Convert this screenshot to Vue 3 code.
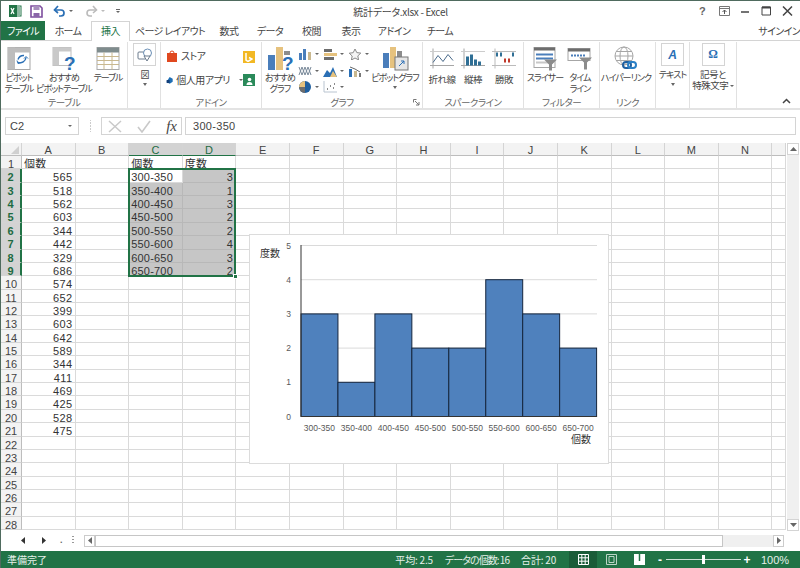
<template>
  <div class="window">
    <!-- タイトルバー -->
    <div class="titlebar">
      <div class="qat">
        <svg width="14" height="14" viewBox="0 0 14 14"><rect x="6" y="2" width="7" height="10" fill="#fff" stroke="#217346"/><path d="M8 4h4M8 6h4M8 8h4M8 10h4" stroke="#217346"/><rect x="1" y="1" width="8" height="12" fill="#217346"/><path d="M3 4l3 6M6 4l-3 6" stroke="#fff" stroke-width="1.3"/></svg>
        <svg width="13" height="13" viewBox="0 0 13 13"><path d="M1 1h9l2 2v9H1z" fill="none" stroke="#7d4e9e" stroke-width="1.6"/><rect x="3.5" y="1" width="6" height="4" fill="#a88fbd"/><rect x="3.5" y="8" width="6" height="4" fill="#8a66a8"/></svg>
        <svg class="undo" width="13" height="12" viewBox="0 0 13 12"><path d="M2 5h6a3 3 0 0 1 0 6H6" fill="none" stroke="#2a6fb5" stroke-width="1.7"/><path d="M5 1L1.5 5 5 8" fill="none" stroke="#2a6fb5" stroke-width="1.7"/></svg>
        <i class="caret small"></i>
        <svg class="redo" width="13" height="12" viewBox="0 0 13 12"><path d="M11 5H5a3 3 0 0 0 0 6h2" fill="none" stroke="#bbb" stroke-width="1.6"/><path d="M8 1l3.5 4L8 8" fill="none" stroke="#bbb" stroke-width="1.6"/></svg>
        <i class="caret small light"></i>
        <span class="customize"><b></b><i class="caret small"></i></span>
      </div>
      <div class="doc-title">統計データ.xlsx - Excel</div>
      <div class="winbtns">
        <span class="help">?</span>
        <svg width="11" height="10" viewBox="0 0 11 10"><path d="M.5 .5h10v9H.5zM.5 2.5h10" fill="none" stroke="#777"/><path d="M5.5 8V4M3.5 6l2-2 2 2" fill="none" stroke="#555"/></svg>
        <svg width="11" height="10" viewBox="0 0 11 10"><path d="M1 6h8" stroke="#444" stroke-width="1.5"/></svg>
        <svg width="11" height="10" viewBox="0 0 11 10"><path d="M1 1h8.5v8H1z" fill="none" stroke="#444"/><path d="M1 1.5h8.5" stroke="#444" stroke-width="2"/></svg>
        <svg width="11" height="10" viewBox="0 0 11 10"><path d="M1 .5l9 9M10 .5l-9 9" stroke="#444" stroke-width="1.5"/></svg>
      </div>
    </div>

    <!-- タブ -->
    <div class="tabs">
      <div v-for="tab in tabs" :key="tab.name" class="tab" :class="{ file: tab.name === 'ファイル', active: tab.name === '挿入' }" :style="{ width: tab.w + 'px' }">{{ tab.name }}</div>
      <div class="signin">サインイン</div>
    </div>

    <!-- リボン -->
    <div class="ribbon">
      <div class="group g-table">
        <div class="group-body">
          <div class="big w36">
            <svg width="24" height="24" viewBox="0 0 24 24"><rect x="1" y="1" width="22" height="22" fill="#fff" stroke="#a6a6a6"/><rect x="1" y="1" width="22" height="5" fill="#bdbdbd"/><rect x="1" y="1" width="7" height="22" fill="#bdbdbd"/><path d="M11 16a6 6 0 0 0 8-5M17 9a6 6 0 0 0-6 4" fill="none" stroke="#2a6fb5" stroke-width="1.4"/><path d="M10 14l1 3 3-1M17 12l2-2 2 2" fill="none" stroke="#2a6fb5"/></svg>
            <span class="lbl">ピボット<br>テーブル</span>
          </div>
          <div class="big w54">
            <svg width="24" height="24" viewBox="0 0 24 24"><rect x="1" y="1" width="18" height="18" fill="#fff" stroke="#bdbdbd"/><rect x="1" y="1" width="18" height="4" fill="#c9c9c9"/><rect x="1" y="1" width="6" height="18" fill="#c9c9c9"/><text x="12" y="23" class="qmark">?</text></svg>
            <span class="lbl">おすすめ<br>ピボットテーブル</span>
          </div>
          <div class="big w34">
            <svg width="24" height="24" viewBox="0 0 24 24"><rect x="1" y="1" width="22" height="22" fill="#fff" stroke="#a9a9a9"/><rect x="1" y="1" width="22" height="5" fill="#7f8c8d"/><path d="M1 10h22M1 14h22M1 18h22M8 6v17M16 6v17" stroke="#c9b88f"/></svg>
            <span class="lbl">テーブル</span>
          </div>
        </div>
        <div class="group-label">テーブル</div>
      </div>

      <div class="group g-illust">
        <div class="group-body">
          <div class="big w33">
            <span class="boxed">
              <svg width="16" height="16" viewBox="0 0 16 16"><rect x="1" y="5" width="8" height="7" rx="1" fill="#fff" stroke="#6b7a8c"/><circle cx="10.5" cy="6" r="4" fill="#fff" stroke="#6b8fb5"/><path d="M7 9l3 5 3-5z" fill="#fff" stroke="#6b7a8c"/></svg>
            </span>
            <span class="lbl">図</span>
            <i class="caret"></i>
          </div>
        </div>
      </div>

      <div class="group g-addin">
        <div class="group-body addin">
          <div class="addin-col">
            <div class="addin-row">
              <svg width="12" height="12" viewBox="0 0 12 12"><rect x="1" y="3" width="10" height="9" fill="#e0481f"/><path d="M4 3a2 2 0 0 1 4 0" fill="none" stroke="#e0481f"/></svg>
              <span>ストア</span>
            </div>
            <div class="addin-row">
              <svg width="12" height="12" viewBox="0 0 12 12"><path d="M6 1l5 3v5l-5 3-5-3z" fill="#1f6fb5"/><rect x="1" y="6" width="5" height="5" fill="#123f7a"/></svg>
              <span>個人用アプリ</span>
              <i class="caret small"></i>
            </div>
          </div>
          <div class="addin-icons">
            <span class="tile bing"><svg width="8" height="9" viewBox="0 0 8 9"><path d="M1 0v7l2 1.5L7 6 4 4.5" fill="none" stroke="#fff" stroke-width="1.5"/></svg></span>
            <span class="tile people"><svg width="9" height="9" viewBox="0 0 9 9"><circle cx="4.5" cy="3.5" r="1.8" fill="#fff"/><path d="M1.5 9a3 3 0 0 1 6 0z" fill="#fff"/></svg></span>
          </div>
        </div>
        <div class="group-label">アドイン</div>
      </div>

      <div class="group g-chart">
        <div class="group-body">
          <div class="big w36">
            <svg width="27" height="25" viewBox="0 0 27 25"><rect x="1" y="9" width="7" height="15" fill="#4a7ebb"/><rect x="9" y="1" width="7" height="23" fill="#e6c27e"/><rect x="17" y="5" width="6" height="4" fill="#8c8c8c"/><text x="15" y="24" class="qmark">?</text></svg>
            <span class="lbl">おすすめ<br>グラフ</span>
          </div>
          <div class="mini-grid">
            <span class="mini"><svg width="14" height="12" viewBox="0 0 14 12"><path d="M1 5h3v7H1z" fill="#4a7ebb"/><path d="M5 1h3v11H5z" fill="#4a7ebb"/><path d="M10 4h3v8h-3z" fill="#c9b88f"/></svg><i class="caret small"></i></span>
            <span class="mini"><svg width="14" height="12" viewBox="0 0 14 12"><path d="M1 1h8v3H1z" fill="#6d6d6d"/><path d="M1 5h13v3H1z" fill="#e6c27e"/><path d="M1 9h10v3H1z" fill="#6d6d6d"/></svg><i class="caret small"></i></span>
            <span class="mini"><svg width="14" height="12" viewBox="0 0 14 12"><path d="M7 1l1.8 3.6 4 .5-3 2.8.8 4L7 10 3.400 12l.8-4-3-2.800 4-.5z" fill="#f4f4f4" stroke="#8a8a8a"/></svg><i class="caret small"></i></span>
            <span class="mini"><svg width="14" height="12" viewBox="0 0 14 12"><path d="M1 2l3 8 3-8 3 8 3-8M1 10l3-8 3 8 3-8 3 8" fill="none" stroke="#7a8a9a"/></svg><i class="caret small"></i></span>
            <span class="mini"><svg width="14" height="12" viewBox="0 0 14 12"><path d="M0 12l4-7 3 3 3-6 4 10z" fill="#2a6fb5"/><path d="M7 12l3-6 4 6z" fill="#e6c27e"/></svg><i class="caret small"></i></span>
            <span class="mini"><svg width="14" height="12" viewBox="0 0 14 12"><path d="M1 4h3v8H1z" fill="#2a6fb5"/><path d="M6 6h3v6H6z" fill="#c9b88f"/><path d="M11 8h2v4h-2z" fill="#777"/><path d="M2 2l5 2 5 3" fill="none" stroke="#666"/></svg><i class="caret small"></i></span>
            <span class="mini"><svg width="14" height="12" viewBox="0 0 14 12"><circle cx="7" cy="6" r="6" fill="#1f5f9f"/><path d="M7 6V0A6 6 0 0 0 1 6z" fill="#e6c27e"/><path d="M7 6H1a6 6 0 0 0 6 6z" fill="#6d6d6d"/></svg><i class="caret small"></i></span>
            <span class="mini"><svg width="14" height="12" viewBox="0 0 14 12"><path d="M1 0v11h13" fill="none" stroke="#b9c4d0"/><path d="M4 8h1M7 5h1M10 7h1M11 3h1" stroke="#666" stroke-width="1.4"/></svg><i class="caret small"></i></span>
          </div>
          <div class="big w44">
            <svg width="27" height="25" viewBox="0 0 27 25"><rect x="1" y="7" width="6" height="15" fill="#4a7ebb"/><rect x="8" y="1" width="6" height="21" fill="#e6c27e"/><rect x="15" y="5" width="5" height="6" fill="#8c8c8c"/><rect x="13" y="11" width="13" height="13" fill="#e6e6e6" stroke="#777"/><path d="M17 20l5-5M19 15h3v3" fill="none" stroke="#2a6fb5"/></svg>
            <span class="lbl">ピボットグラフ</span>
            <i class="caret"></i>
          </div>
        </div>
        <div class="group-label">グラフ<svg class="launcher" width="7" height="7" viewBox="0 0 7 7"><path d="M.5 .5h3M.5 .5v3M2 2l4 4M6 3v3H3" fill="none" stroke="#777"/></svg></div>
      </div>

      <div class="group g-spark">
        <div class="group-body">
          <div class="big w38">
            <svg width="24" height="20" viewBox="0 0 24 20"><path d="M3 0v20M0 17h24" stroke="#a6a6a6" fill="none"/><path d="M0 3h24" stroke="#ccc"/><path d="M3 14l5-7 5 6 5-7 5 6" fill="none" stroke="#4a6a8a"/></svg>
            <span class="lbl kanji">折れ線</span>
          </div>
          <div class="big w24">
            <svg width="24" height="20" viewBox="0 0 24 20"><path d="M3 0v20M0 17h24" stroke="#a6a6a6" fill="none"/><path d="M0 3h24" stroke="#ccc"/><path d="M5 8h3v9H5zM9 6h3v11H9zM13 11h3v6h-3zM17 13h3v4h-3z" fill="#2f6f95"/></svg>
            <span class="lbl kanji">縦棒</span>
          </div>
          <div class="big w38">
            <svg width="24" height="20" viewBox="0 0 24 20"><path d="M3 0v20M0 17h24M0 3h24" stroke="#bbb" fill="none"/><path d="M4 4h2v4H4zM8 4h2v4H8zM20 4h2v4h-2z" fill="#2f6f95"/><path d="M12 10h2v4h-2zM16 10h2v4h-2z" fill="#c0392b"/></svg>
            <span class="lbl kanji">勝敗</span>
          </div>
        </div>
        <div class="group-label">スパークライン</div>
      </div>

      <div class="group g-filter">
        <div class="group-body">
          <div class="big w42">
            <svg width="24" height="24" viewBox="0 0 24 24"><rect x="1" y="1" width="21" height="20" fill="#fff" stroke="#a6a6a6"/><rect x="1" y="1" width="21" height="3" fill="#6d6d6d"/><path d="M3 8h17" stroke="#4a7ebb" stroke-width="2"/><path d="M3 12h17" stroke="#4a7ebb" stroke-width="2"/><path d="M3 16h17" stroke="#c7c7c7" stroke-width="2"/><path d="M11 13h13l-5 5v6h-3v-6z" fill="#8c8c8c"/></svg>
            <span class="lbl">スライサー</span>
          </div>
          <div class="big w28">
            <svg width="24" height="24" viewBox="0 0 24 24"><rect x="0" y="2" width="22" height="12" fill="#fff" stroke="#a6a6a6"/><rect x="0" y="2" width="22" height="3" fill="#6d6d6d"/><path d="M3 9h14" stroke="#4a7ebb" stroke-width="2" stroke-dasharray="2 1"/><path d="M11 11h13l-5 5v7h-3v-7z" fill="#8c8c8c"/></svg>
            <span class="lbl">タイム<br>ライン</span>
          </div>
        </div>
        <div class="group-label">フィルター</div>
      </div>

      <div class="group g-link">
        <div class="group-body">
          <div class="big w52">
            <svg width="26" height="25" viewBox="0 0 26 25"><circle cx="11" cy="10" r="9" fill="#fff" stroke="#a6a6a6"/><ellipse cx="11" cy="10" rx="4" ry="9" fill="none" stroke="#a6a6a6"/><path d="M2 10h18M3 5.500h16M3 14.500h16" stroke="#a6a6a6"/><rect x="10" y="16" width="8" height="6" rx="3" fill="none" stroke="#1f5f9f" stroke-width="2"/><rect x="15" y="16" width="8" height="6" rx="3" fill="none" stroke="#2a7fc5" stroke-width="2"/></svg>
            <span class="lbl">ハイパーリンク</span>
          </div>
        </div>
        <div class="group-label">リンク</div>
      </div>

      <div class="group g-text">
        <div class="group-body">
          <div class="big w33">
            <span class="boxed glyph italic">A</span>
            <span class="lbl">テキスト</span>
            <i class="caret"></i>
          </div>
        </div>
      </div>

      <div class="group g-symbol">
        <div class="group-body">
          <div class="big w46">
            <span class="boxed glyph">Ω</span>
            <span class="lbl kanji">記号と<br>特殊文字 <i class="caret small inline"></i></span>
          </div>
        </div>
      </div>

      <div class="ribbon-rest">
        <svg width="9" height="6" viewBox="0 0 9 6"><path d="M1 5l3.500-3.500L8 5" fill="none" stroke="#444" stroke-width="1.5"/></svg>
      </div>
    </div>

    <!-- 数式バー -->
    <div class="formula-bar">
      <div class="name-box"><span>C2</span><i class="caret small"></i></div>
      <div class="grip"></div>
      <div class="fx-box">
        <svg width="14" height="13" viewBox="0 0 14 13"><path d="M1 1l12 11M13 1L1 12" stroke="#c9c9c9" stroke-width="1.5"/></svg>
        <svg width="14" height="13" viewBox="0 0 14 13"><path d="M1 7l4 5 8-11" fill="none" stroke="#c9c9c9" stroke-width="1.6"/></svg>
        <span class="fx">fx</span>
      </div>
      <div class="formula-input">300-350</div>
    </div>

    <!-- シート -->
    <div class="sheet-row">
      <div class="grid">
        <div class="corner"><i></i></div>
        <div v-for="col in cols" :key="col" class="col-head" :class="{ sel: col === 'C' || col === 'D' }">{{ col }}</div>
        <div class="col-head tail"></div>
        <template v-for="row in rowNums" :key="row">
          <div class="row-head" :class="{ sel: row >= 2 && row <= 9 }">{{ row }}</div>
          <div v-for="col in cols" :key="col" class="cell" :class="cellClass(col, row)">{{ cellText(col, row) }}</div>
          <div class="cell tail"></div>
        </template>
        <div class="selection"><i class="handle"></i></div>

        <div class="chart">
          <svg width="358" height="228" viewBox="0 0 358 228">
            <path v-for="v in [1, 2, 3, 4, 5]" :key="v" :d="`M51 ${yOf(v)}H347`" stroke="#dadada" />
            <rect v-for="(bar, i) in bars" :key="bar.label" :x="51 + i * barW" :y="yOf(bar.value)" :width="barW" :height="yOf(0) - yOf(bar.value)" fill="#4f81bd" stroke="#14253c" />
            <path :d="`M51 10V${yOf(0)}H347`" fill="none" stroke="#333" />
            <text v-for="v in [0, 1, 2, 3, 4, 5]" :key="v" x="41" :y="yOf(v) + 3" text-anchor="end" class="tick">{{ v }}</text>
            <text v-for="(bar, i) in bars" :key="bar.label" :x="51 + (i + .5) * barW" y="196" text-anchor="middle" class="cat">{{ bar.label }}</text>
            <text x="10" y="22" class="axis">度数</text>
            <text x="321" y="208" class="axis">個数</text>
          </svg>
        </div>
      </div>
      <div class="vscroll">
        <span class="arrow"><svg width="7" height="4" viewBox="0 0 7 4"><path d="M0 4l3.500-4L7 4z" fill="#666"/></svg></span>
        <span class="arrow"><svg width="7" height="4" viewBox="0 0 7 4"><path d="M0 0l3.500 4L7 0z" fill="#666"/></svg></span>
      </div>
    </div>

    <!-- 横スクロール -->
    <div class="hbar">
      <div class="sheet-nav">
        <svg width="4" height="7" viewBox="0 0 4 7"><path d="M4 0L0 3.500 4 7z" fill="#333"/></svg>
        <svg width="4" height="7" viewBox="0 0 4 7"><path d="M0 0l4 3.500L0 7z" fill="#333"/></svg>
        <span class="dot">.</span>
        <span class="vdots"></span>
      </div>
      <div class="hscroll">
        <span class="harrow"><svg width="4" height="7" viewBox="0 0 4 7"><path d="M4 0L0 3.500 4 7z" fill="#666"/></svg></span>
        <span class="thumb"></span>
        <span class="track"></span>
        <span class="harrow"><svg width="4" height="7" viewBox="0 0 4 7"><path d="M0 0l4 3.500L0 7z" fill="#666"/></svg></span>
      </div>
    </div>

    <!-- ステータスバー -->
    <div class="status">
      <span class="ready">準備完了</span>
      <div class="stats"><span>平均: 2.5</span><span class="tight">データの個数: 16</span><span>合計: 20</span></div>
      <div class="views">
        <span class="view on"><svg width="11" height="11" viewBox="0 0 11 11"><path d="M.5 .5h10v10H.5zM.5 3.800h10M.5 7.200h10M3.800 .5v10M7.200 .5v10" fill="none" stroke="#fff"/></svg></span>
        <span class="view"><svg width="11" height="11" viewBox="0 0 11 11"><path d="M.5 .5h10v10H.5z" fill="none" stroke="#bcd5c6"/><path d="M3 2.500h5v6H3z" fill="none" stroke="#bcd5c6"/></svg></span>
        <span class="view"><svg width="11" height="11" viewBox="0 0 11 11"><rect width="11" height="11" fill="#fff"/><path d="M5.500 0v7" stroke="#217346" stroke-width="1.5"/></svg></span>
      </div>
      <div class="zoom">
        <span class="zbtn">-</span>
        <div class="zslider"><i></i></div>
        <span class="zbtn">+</span>
        <span class="zpct">100%</span>
      </div>
    </div>
  </div>
</template>

<script setup>
const tabs = [
  { name: 'ファイル', w: 44 },
  { name: 'ホーム', w: 46 },
  { name: '挿入', w: 39 },
  { name: 'ページ レイアウト', w: 80 },
  { name: '数式', w: 38 },
  { name: 'データ', w: 44 },
  { name: '校閲', w: 39 },
  { name: '表示', w: 40 },
  { name: 'アドイン', w: 46 },
  { name: 'チーム', w: 46 },
]
const cols = ['A', 'B', 'C', 'D', 'E', 'F', 'G', 'H', 'I', 'J', 'K', 'L', 'M', 'N']
const rowNums = Array.from({ length: 28 }, (_, i) => i + 1)

const counts = [565, 518, 562, 603, 344, 442, 329, 686, 574, 652, 399, 603, 642, 589, 344, 411, 469, 425, 528, 475]
const bars = [
  { label: '300-350', value: 3 },
  { label: '350-400', value: 1 },
  { label: '400-450', value: 3 },
  { label: '450-500', value: 2 },
  { label: '500-550', value: 2 },
  { label: '550-600', value: 4 },
  { label: '600-650', value: 3 },
  { label: '650-700', value: 2 },
]

const barW = 36.95
const yOf = (v) => 181.5 - v * 34.2

const cellText = (col, row) => {
  if (col === 'A') return row === 1 ? '個数' : counts[row - 2]
  if (col === 'C') return row === 1 ? '個数' : bars[row - 2]?.label
  if (col === 'D') return row === 1 ? '度数' : bars[row - 2]?.value
  return ''
}

const cellClass = (col, row) => ({
  num: row > 1 && (col === 'A' || col === 'D'),
  picked: row >= 2 && row <= 9 && (col === 'D' || (col === 'C' && row > 2)),
})
</script>

<style>
html, body { margin: 0; background: #fff; overflow: hidden; }
</style>

<style scoped>
.window {
  width: 800px; height: 568px; box-sizing: border-box; overflow: hidden;
  display: flex; flex-direction: column;
  border-top: 1px solid #4f6b5e; border-left: 1px solid #4f6b5e;
  background: #fff; color: #444;
  font: 10px "Noto Sans CJK JP", "Liberation Sans", sans-serif;
  font-feature-settings: "palt";
}

.caret {
  display: block; width: 0; height: 0;
  border: 2.5px solid transparent; border-top: 3px solid #666; border-bottom: 0;
}
.caret.small { border-width: 2px; border-top-width: 2.5px; border-bottom-width: 0; }
.caret.light { border-top-color: #bbb; }
.caret.inline { display: inline-block; vertical-align: middle; }

/* ── タイトルバー ── */
.titlebar { height: 20px; flex-shrink: 0; display: grid; grid-template-columns: 1fr auto 1fr; align-items: center; }
.qat { display: flex; align-items: center; padding-left: 7px; }
.qat svg:nth-child(2) { margin-left: 8px; }
.qat .undo { margin-left: 10px; }
.qat .undo + .caret { margin-left: 3px; }
.qat .redo { margin-left: 12px; }
.qat .redo + .caret { margin-left: 3px; }
.customize { display: flex; flex-direction: column; align-items: center; gap: 1px; margin-left: 11px; }
.customize b { width: 4px; height: 1px; background: #666; }
.doc-title { font-size: 10px; color: #444; letter-spacing: -.3px; }
.winbtns { display: flex; justify-content: flex-end; align-items: center; gap: 10px; padding-right: 7px; }
.help { font: bold 11px "Liberation Sans", sans-serif; color: #666; width: 8px; margin-right: 2px; }

/* ── タブ ── */
.tabs { height: 20px; flex-shrink: 0; display: flex; align-items: stretch; position: relative; border-bottom: 1px solid #d4d4d4; box-sizing: border-box; }
.tab { box-sizing: border-box; text-align: center; line-height: 19px; font-size: 10px; letter-spacing: -.6px; color: #444; white-space: nowrap; }
.tab.file { background: #217346; color: #fff; }
.tab.active {
  margin-bottom: -1px; line-height: 18px; background: #fff; color: #217346;
  border: 1px solid #d4d4d4; border-bottom: 0;
}
.signin { margin-left: auto; line-height: 19px; color: #444; white-space: nowrap; letter-spacing: -.6px; }

/* ── リボン ── */
.ribbon { height: 69px; flex-shrink: 0; display: flex; border-bottom: 2px solid #e3e3e3; box-sizing: border-box; }
.group { display: flex; flex-direction: column; box-sizing: border-box; height: 66px; margin-top: 1px; border-right: 1px solid #e1e1e1; }
.group-body { flex: 1; display: flex; min-height: 0; }
.group-label { height: 13px; line-height: 14px; text-align: center; font-size: 9.5px; letter-spacing: -.5px; color: #666; position: relative; }
.launcher { position: absolute; right: 2px; top: 4px; }
.g-table { width: 127px; }
.g-illust { width: 33px; }
.g-addin { width: 101px; }
.g-chart { width: 161px; }
.g-spark { width: 101px; }
.g-filter { width: 76px; }
.g-link { width: 56px; }
.g-text { width: 34px; }
.g-symbol { width: 47px; }
.ribbon-rest { flex: 1; display: flex; align-items: flex-end; justify-content: flex-end; padding: 0 9px 4px 0; }

.big { display: flex; flex-direction: column; align-items: center; flex-shrink: 0; padding-top: 4px; }
.big > svg { height: 25px; overflow: visible; }
.big > .caret { margin-top: 3px; }
.w24 { width: 24px; } .w28 { width: 28px; } .w33 { width: 33px; } .w34 { width: 34px; }
.w36 { width: 36px; } .w38 { width: 38px; } .w42 { width: 42px; } .w44 { width: 44px; }
.w46 { width: 46px; } .w52 { width: 52px; } .w54 { width: 54px; }
.lbl { margin-top: 1px; line-height: 11px; text-align: center; white-space: nowrap; color: #444; font-size: 9px; letter-spacing: -1px; }
.lbl.kanji { font-size: 9.5px; letter-spacing: -.5px; margin-top: 3px; }
.qmark { font: bold 19px "Liberation Sans", sans-serif; fill: #2a6fb5; }
.boxed {
  width: 21px; height: 21px; border: 1px solid #d4d4d4; display: flex;
  align-items: center; justify-content: center; flex-shrink: 0;
}
.glyph { font: bold 12px "Liberation Serif", serif; color: #2a6fb5; }
.glyph.italic { font: italic bold 12px "Liberation Sans", sans-serif; }
.big:has(.boxed) { padding-top: 1px; }
.big:has(.boxed) .lbl { margin-top: 3px; }

.addin { padding: 7px 0 0 5px; }
.addin-col { width: 77px; display: flex; flex-direction: column; gap: 11px; letter-spacing: -.5px; }
.addin-row { display: flex; align-items: center; gap: 3px; white-space: nowrap; height: 13px; }
.addin-row .caret { margin-left: 6px; }
.addin-icons { display: flex; flex-direction: column; gap: 11px; margin-top: 2px; }
.tile { width: 12px; height: 12px; display: flex; align-items: center; justify-content: center; }
.tile.bing { background: #f2b824; }
.tile.people { background: #2a8a5a; }

.mini-grid { width: 75px; margin-top: 4px; display: grid; grid-template-columns: repeat(3, 25px); grid-auto-rows: 16.5px; align-items: center; align-content: start; }
.mini { display: flex; align-items: center; gap: 3px; }

/* ── 数式バー ── */
.formula-bar { height: 33px; flex-shrink: 0; box-sizing: border-box; padding: 7px 4px 8px 4px; display: flex; align-items: stretch; }
.name-box {
  width: 74px; box-sizing: border-box; border: 1px solid #d4d4d4; padding: 0 6px 0 4px;
  display: flex; align-items: center; justify-content: space-between;
  font: 11px "Liberation Sans", sans-serif; color: #444;
}
.grip { width: 22px; background: radial-gradient(circle, #999 .7px, transparent 1px) center / 3px 3px repeat-y; margin: 3px 0; }
.fx-box {
  width: 81px; box-sizing: border-box; border: 1px solid #d4d4d4; display: flex;
  align-items: center; padding: 0 4px 0 6px; justify-content: space-between;
}
.fx { font: italic 15px "Liberation Serif", serif; color: #444; }
.formula-input {
  flex: 1; margin-left: 3px; border: 1px solid #d4d4d4; padding-left: 7px;
  font: 11px/16px "Liberation Sans", sans-serif; letter-spacing: .3px; color: #444;
}

/* ── シート ── */
.sheet-row { height: 388px; flex-shrink: 0; display: flex; }
.grid {
  width: 785px; flex-shrink: 0; position: relative; display: grid;
  grid-template-columns: 21px repeat(14, 53.6px) 1fr;
  grid-template-rows: 13px repeat(28, 13.36px);
  font: 11px "Liberation Sans", "Noto Sans CJK JP", sans-serif; overflow: hidden; color: #222;
}
.corner, .col-head, .row-head { background: #f3f3f3; box-sizing: border-box; color: #444; overflow: hidden; }
.corner { border-right: 1px solid #d4d4d4; border-bottom: 1px solid #bdbdbd; position: relative; }
.corner i {
  position: absolute; right: 2px; bottom: 1px; width: 0; height: 0;
  border-left: 8px solid transparent; border-bottom: 8px solid #d0d0d0;
}
.col-head {
  border-right: 1px solid #d4d4d4; border-bottom: 1px solid #bdbdbd;
  text-align: center; line-height: 15px; letter-spacing: .2px;
}
.col-head.sel { background: #d3d3d3; color: #1e6b42; border-bottom: 1px solid #217346; }
.row-head { border-right: 1px solid #bdbdbd; border-bottom: 1px solid #d4d4d4; text-align: center; line-height: 16px; }
.row-head.sel { background: #d3d3d3; color: #1e6b42; border-right: 2px solid #217346; font-weight: 600; }
.cell {
  box-sizing: border-box; border-right: 1px solid #dadada; border-bottom: 1px solid #dadada;
  padding: 0 2px; line-height: 16px; white-space: nowrap; overflow: hidden;
  letter-spacing: .2px; color: #333;
}
.cell.num { text-align: right; letter-spacing: .4px; }
.cell.picked { background: #c6c6c6; border-color: #b8b8b8; }
/* 絶対配置の grid 子要素: グリッド領域を基準にする */
.selection {
  position: absolute; grid-area: 3 / 4 / 11 / 6; inset: -1px 0 -1px -1px;
  border: 2px solid #217346; pointer-events: none; z-index: 2;
}
.handle {
  position: absolute; right: -4px; bottom: -4px; width: 5px; height: 5px;
  background: #217346; border: 1px solid #fff; box-sizing: border-box;
}
.chart { position: absolute; left: 249px; top: 92px; width: 358px; height: 228px; background: #fff; box-sizing: border-box; outline: 1px solid #dcdcdc; z-index: 3; }
.chart svg { display: block; }
.tick, .cat { font: 8.5px "Liberation Sans", sans-serif; fill: #595959; }
.axis { font: 10px "Noto Sans CJK JP", sans-serif; fill: #333; }

.vscroll {
  flex: 1; margin: 0 1px; background: #f0f0f0; display: flex; flex-direction: column;
  justify-content: space-between;
}
.arrow { height: 12px; background: #fff; border: 1px solid #d4d4d4; box-sizing: border-box; display: flex; align-items: center; justify-content: center; }

.hbar { height: 20px; flex-shrink: 0; display: flex; align-items: center; box-sizing: border-box; padding-bottom: 2px; }
.sheet-nav { width: 83px; display: flex; align-items: center; padding-left: 20px; box-sizing: border-box; }
.sheet-nav svg:nth-child(2) { margin-left: 17px; }
.dot { margin-left: 14px; color: #666; font: bold 9px "Liberation Sans", sans-serif; }
.vdots { width: 2px; height: 8px; margin-left: 9px; background: repeating-linear-gradient(#999 0 1px, transparent 1px 3px); }
.hscroll { width: 700px; height: 12px; display: flex; align-items: stretch; margin-top: 1px; }
.harrow { width: 11px; flex-shrink: 0; border: 1px solid #ccc; box-sizing: border-box; display: flex; align-items: center; justify-content: center; background: #fff; }
.thumb { flex: 0 0 628px; box-sizing: border-box; border: 1px solid #c6c6c6; background: #fff; }
.track { flex: 1; background: #f0f0f0; }

.status {
  flex: 1; min-height: 0; background: #217346; color: #e6f0ea; display: flex; align-items: center;
  font-size: 10px;
}
.ready { padding-left: 6px; }
.stats { margin-left: auto; display: flex; gap: 12px; letter-spacing: -.2px; }
.stats .tight { letter-spacing: -.95px; }
.views { display: flex; margin-left: 13px; align-self: stretch; }
.view { width: 28px; display: flex; align-items: center; justify-content: center; }
.view.on { background: #1a5c38; }
.zoom { display: flex; align-items: center; margin-left: 2px; width: 145px; }
.zbtn { width: 10px; text-align: center; font: bold 12px "Liberation Sans", sans-serif; color: #fff; }
.zslider { width: 75px; height: 1px; background: #cfe0d6; position: relative; margin: 0 1px; }
.zslider i { position: absolute; left: 36px; top: -4px; width: 3px; height: 9px; background: #fff; }
.zpct { margin-left: 9px; font: 11px "Liberation Sans", sans-serif; color: #e6f0ea; }
</style>
